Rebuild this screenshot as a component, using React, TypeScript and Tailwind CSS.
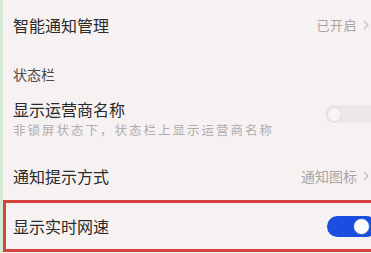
export default function App() {
    return (
        <div className="w-[371px] h-[253px] overflow-hidden bg-[#f6f2f2] flex" style={{ fontFamily: '"Noto Sans CJK SC", "Noto Sans", sans-serif' }}>
            {/* light green strip at the left edge */}
            <div className="w-[3px] h-full bg-[#d3ead5] shrink-0" />

            <div className="flex-1 flex flex-col">
                {/* 智能通知管理 */}
                <div className="h-[50px] flex items-center justify-between pl-[10px] pr-[2px]">
                    <span className="text-[16px] leading-[20px] text-[#2a2a2a]">智能通知管理</span>
                    <span className="flex items-center gap-[6px] text-[13px] tracking-[0.5px] text-[#a9a5a5]">
                        已开启
                        <Chevron />
                    </span>
                </div>

                {/* section header */}
                <div className="h-[48px] flex items-center pl-[10px]">
                    <span className="text-[14px] leading-[18px] text-[#4a4a4a]">状态栏</span>
                </div>

                {/* 显示运营商名称 */}
                <div className="h-[54px] flex items-start justify-between pl-[10px] pt-[1px]">
                    <div className="flex flex-col">
                        <span className="text-[16px] leading-[20px] text-[#2a2a2a]">显示运营商名称</span>
                        <span className="mt-[2px] text-[12.5px] leading-[18px] tracking-[2px] text-[#b0acac]">非锁屏状态下，状态栏上显示运营商名称</span>
                    </div>
                    <div className="mt-[6px] mr-[-6px] w-[52px] h-[18px] rounded-full bg-[#ece8e8] flex items-center px-[2px]">
                        <div className="w-[15px] h-[15px] rounded-full bg-[#f7f4f4] border border-[#e0dbdb]" />
                    </div>
                </div>

                {/* 通知提示方式 */}
                <div className="h-[48px] flex items-center justify-between pl-[10px] pr-[2px]">
                    <span className="text-[16px] leading-[20px] text-[#2a2a2a]">通知提示方式</span>
                    <span className="flex items-center gap-[6px] text-[14px] text-[#a9a5a5]">
                        通知图标
                        <Chevron />
                    </span>
                </div>

                {/* highlighted row */}
                <div className="h-[52px] border-[3px] border-r-0 border-[#d8423e] flex items-center justify-between pl-[7px]">
                    <span className="text-[16px] leading-[20px] text-[#2a2a2a]">显示实时网速</span>
                    <div className="mr-[-6px] w-[50px] h-[21px] rounded-full bg-[#1a4ee0] flex items-center justify-end pr-[7px]">
                        <div className="w-[17px] h-[17px] rounded-full bg-white border-[1.5px] border-[#2a5ad8]" />
                    </div>
                </div>
            </div>
        </div>
    );
}

const Chevron = () => (
    <svg width="6" height="10" viewBox="0 0 6 10" fill="none">
        <path d="M1 1l4 4-4 4" stroke="#c2bebe" strokeWidth="1.2" />
    </svg>
);
